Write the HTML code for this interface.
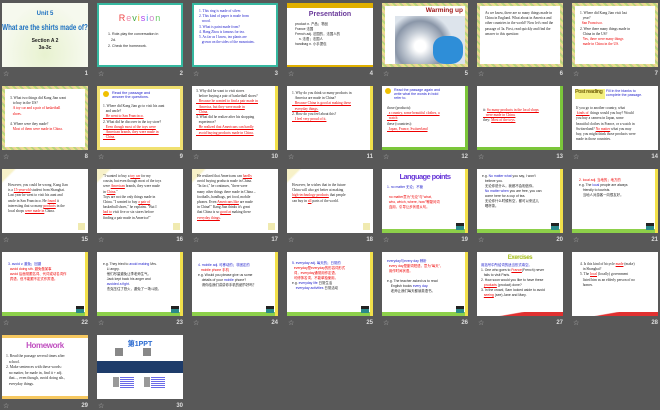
<!DOCTYPE html>
<html><head><meta charset="utf-8"><style>
*{margin:0;padding:0;box-sizing:border-box}
body{width:660px;height:410px;background:#585858;position:relative;overflow:hidden;font-family:"Liberation Serif","Noto Serif CJK SC",serif}
.s{position:absolute;width:86px;height:64px;background:#fff;overflow:hidden;font-size:3.6px;line-height:1.45;color:#222}
.st{position:absolute;font:7px "DejaVu Sans",sans-serif;color:#bbb}
.n{position:absolute;width:30px;text-align:right;font:bold 6px "Liberation Sans",sans-serif;color:#ddd}
.r{color:#e00}.b{color:#22c}.u{text-decoration:underline}
.t{position:absolute;left:6px;right:5px;top:8px}
.grb{border:3px solid #7bc63a;border-top:none;border-left:none}
.flow{background:linear-gradient(#fff,#fff) padding-box,repeating-linear-gradient(45deg,#e7e08a 0 2px,#b9d47c 2px 4px,#f0c8a0 4px 5px) border-box;border:3px solid transparent}
.cap{position:absolute;right:4px;bottom:3px;width:8px;height:7px;background:#2b8a8a;border-top:3px solid #222}
.gb{position:absolute;left:0;right:0;bottom:0;height:4px;background:#8dd04a}
.yb{position:absolute;right:0;top:0;bottom:0;width:3px;background:#f2e04a}
.cn{font-family:"Liberation Sans","Noto Sans CJK SC",sans-serif}
</style></head><body>

<!-- Row 1 -->
<div class="s" style="left:2px;top:3px;background:radial-gradient(ellipse at 50% 80%,#e8f2d0,#f6f9ee 70%)">
<div style="position:absolute;top:8px;width:100%;text-align:center;font:bold 6px 'Liberation Sans';color:#1a6fc0">Unit 5</div>
<div style="position:absolute;top:20px;left:43px;white-space:nowrap;transform:translateX(-50%) scaleX(.78);font:bold 8px 'Liberation Sans';color:#1a6fc0">What are the shirts made of?</div>
<div style="position:absolute;top:35px;width:100%;text-align:center;font:bold 5px 'Liberation Sans';color:#222;line-height:1.3">Section A 2<br>3a-3c</div>
</div>
<div class="s" style="left:97px;top:3px;border:2px solid #36b8a0">
<div style="position:absolute;top:8px;width:100%;text-align:center;font:9px 'Liberation Sans';letter-spacing:1px"><span style="color:#e44">R</span><span style="color:#e8a">e</span><span style="color:#4a4">v</span><span style="color:#e8b020">i</span><span style="color:#a4e">s</span><span style="color:#4ad">i</span><span style="color:#c8c">o</span><span style="color:#6c6">n</span></div>
<div style="position:absolute;top:26px;left:9px;font:3.6px 'Liberation Sans';line-height:1.7">1. Role-play the conversation in<br>&nbsp;&nbsp;&nbsp;2d.<br>2. Check the homework.</div>
</div>
<div class="s" style="left:192px;top:3px;border:2px solid #36b8a0">
<div class="t b" style="top:4px;left:5px">1. This ring is made of silver.<br>2. This kind of paper is made from<br>&nbsp;&nbsp;&nbsp;wood.<br>3. What is paint made from?<br>4. Hang Zhou is famous for tea.<br>5. As far as I know, tea plants are<br>&nbsp;&nbsp;&nbsp;grown on the sides of the mountains.</div>
</div>
<div class="s" style="left:287px;top:3px;border-top:5px solid #e0b000;border-bottom:2px solid #e0b000">
<div style="position:absolute;top:3px;width:100%;text-align:center;font:bold 7px 'Liberation Sans';color:#6a3a9a">Presentation</div>
<div class="t cn" style="top:14px;left:8px;font-size:3.4px">product n. 产品；物品<br>France 法国<br>French adj. 法国的，法国人的<br>&nbsp;&nbsp;&nbsp;&nbsp;n. 法语；法国人<br>handbag n. 小手提包</div>
</div>
<div class="s flow" style="left:382px;top:3px">
<div style="position:absolute;left:10px;top:10px;width:72px;height:50px;background:radial-gradient(circle at 35% 60%,#fff 0 10%,#c8cfd8 25%,#8a96a8 45%,#dde4ec 60%),#ccd;"></div>
<div style="position:absolute;left:48px;top:30px;width:30px;height:28px;background:#2e8ed8;border-radius:40%"></div>
<div style="position:absolute;right:2px;top:1px;font:bold 6.5px 'Liberation Sans';color:#a01818">Warming up</div>
</div>
<div class="s flow" style="left:477px;top:3px">
<div class="t" style="top:5px;left:5px">As we know, there are so many things made in China in England. What about in America and other countries in the world? Now let's read the passage of 3a. First, read quickly and find the answer to this question:</div>
</div>
<div class="s flow" style="left:572px;top:3px">
<div class="t" style="top:5px;left:5px">1. Where did Kang Jian visit last<br>&nbsp;&nbsp;&nbsp;year?<br><span class="r">&nbsp;&nbsp;San Francisco.</span><br>2. Were there many things made in<br>&nbsp;&nbsp;&nbsp;China in the US?<br><span class="r">&nbsp;&nbsp;&nbsp;Yes, there were many things<br>&nbsp;&nbsp;&nbsp;made in China in the US.</span></div>
</div>

<!-- Row 2 -->
<div class="s flow" style="left:2px;top:86px">
<div class="t" style="top:7px;left:5px">3. What two things did Kang Jian want<br>&nbsp;&nbsp;&nbsp;to buy in the US?<br><span class="r">&nbsp;&nbsp;&nbsp;A toy car and a pair of basketball<br>&nbsp;&nbsp;&nbsp;shoes.</span><br><br>4. Where were they made?<br><span class="r">&nbsp;&nbsp;&nbsp;Most of them were made in China.</span></div>
</div>
<div class="s" style="left:97px;top:86px;background:#fff;border:3px solid #f0e070">
<div style="position:absolute;left:3px;top:2px;width:6px;height:6px;border-radius:50%;background:#f0c000"></div>
<div class="b" style="position:absolute;left:12px;top:2px;font:3.8px 'Liberation Sans'">Read the passage and<br>answer the questions.</div>
<div class="t" style="top:15px;left:3px">1. Where did Kang Jian go to visit his aunt<br>&nbsp;&nbsp;&nbsp;and uncle?<br><span class="r u">&nbsp;&nbsp;&nbsp;He went to San Francisco.</span><br>2. What did he discover in the toy store?<br><span class="r u">&nbsp;&nbsp;&nbsp;Even though most of the toys were<br>&nbsp;&nbsp;&nbsp;American brands, they were made in<br>&nbsp;&nbsp;&nbsp;China.</span></div>
</div>
<div class="s" style="left:192px;top:86px">
<div class="t" style="top:3px;left:4px">3. Why did he want to visit stores<br>&nbsp;&nbsp;&nbsp;before buying a pair of basketball shoes?<br><span class="r u">&nbsp;&nbsp;&nbsp;Because he wanted to find a pair made in<br>&nbsp;&nbsp;&nbsp;America, but they were made in<br>&nbsp;&nbsp;&nbsp;China.</span><br>4. What did he realize after his shopping<br>&nbsp;&nbsp;&nbsp;experience?<br><span class="r u">&nbsp;&nbsp;&nbsp;He realized that Americans can hardly<br>&nbsp;&nbsp;&nbsp;avoid buying products made in China.</span></div>
<div class="yb"></div>
</div>
<div class="s" style="left:287px;top:86px">
<div class="t" style="top:5px;left:5px">1. Why do you think so many products in<br>&nbsp;&nbsp;&nbsp;America are made in China?<br><span class="r u">&nbsp;&nbsp;&nbsp;Because China is good at making these<br>&nbsp;&nbsp;&nbsp;everyday things.</span><br>2. How do you feel about this?<br><span class="r u">&nbsp;&nbsp;&nbsp;I feel very proud of it.</span></div>
<div class="yb"></div>
</div>
<div class="s" style="left:382px;top:86px">
<div style="position:absolute;left:3px;top:2px;width:6px;height:6px;border-radius:50%;background:#f0c000"></div>
<div class="b" style="position:absolute;left:12px;top:2px;font:3.6px 'Liberation Sans'">Read the passage again and<br>write what the words in bold<br>refer to.</div>
<div class="t" style="top:20px;left:5px">those (products):<br><span class="r u">&nbsp;&nbsp;a country, some beautiful clothes, a<br>&nbsp;&nbsp;watch</span><br>these (countries):<br><span class="r u">&nbsp;&nbsp;Japan, France, Switzerland</span></div>
<div class="grb" style="position:absolute;inset:0"></div>
</div>
<div class="s" style="left:477px;top:86px">
<div class="t" style="top:22px;left:6px">it: <span class="r u">So many products in the local shops<br>&nbsp;&nbsp;&nbsp;were made in China.</span><br>they: <span class="r u">Most of the toys.</span></div>
<div class="grb" style="position:absolute;inset:0"></div>
</div>
<div class="s" style="left:572px;top:86px">
<div style="position:absolute;left:3px;top:3px;width:30px;height:10px;background:#f4f080;font:bold 5.5px 'Liberation Sans';color:#7a6a10;letter-spacing:-.5px">Post reading</div>
<div class="b" style="position:absolute;left:34px;top:3px;font:3.6px 'Liberation Sans'">Fill in the blanks to<br>complete the passage.</div>
<div class="t" style="top:20px;left:4px">If you go to another country, what<br><span class="r u">&nbsp;kinds of&nbsp;</span> things would you buy? Would<br>you buy a camera in Japan, some<br>beautiful clothes in France, or a watch in<br>Switzerland? <span class="r u">No matter</span> what you may<br>buy, you might think those products were<br>made in those countries.</div>
</div>

<!-- Row 3 -->
<div class="s" style="left:2px;top:169px;background:linear-gradient(135deg,#f7f1c8 0 8%,#fff 10%)">
<div class="t" style="top:14px;left:6px">However, you could be wrong. Kang Jian<br>is a <span class="r u">15-year-old</span> student from Shanghai.<br>Last year he went to visit his aunt and<br>uncle in San Francisco. He <span class="r u">found</span> it<br>interesting that so many <span class="r u">products</span> in the<br>local shops <span class="r u">were made in</span> China.</div>
<div style="position:absolute;right:3px;bottom:3px;width:7px;height:7px;background:#f0eab0"></div>
</div>
<div class="s" style="left:97px;top:169px;background:linear-gradient(135deg,#f7f1c8 0 8%,#fff 10%)">
<div class="t" style="top:5px;left:6px">"I wanted to buy a <span class="r u">toy car</span> for my<br>cousin, but even though most of the toys<br>were <span class="r u">American</span> brands, they were made<br>in <span class="r u">China</span>."<br>Toys are not the only things made in<br>China. "I wanted to buy <span class="r u">a pair of</span><br>basketball shoes," he explains. "But I<br><span class="r u">had to</span> visit five or six stores before<br>finding a pair made in America!"</div>
<div style="position:absolute;right:3px;bottom:3px;width:7px;height:7px;background:#f0eab0"></div>
</div>
<div class="s" style="left:192px;top:169px;background:linear-gradient(135deg,#f7f1c8 0 8%,#fff 10%)">
<div class="t" style="top:5px;left:5px">He realized that Americans can <span class="r u">hardly</span><br>avoid buying products made in China.<br>"In fact," he continues, "there were<br>many other things there made in China –<br>footballs, handbags, pet food, mobile<br>phones. Even <span class="r u">Americans like</span> are made<br>in China!" Kang Jian thinks it's great<br>that China is so <span class="r u">good at</span> making these<br><span class="r u">everyday things</span>.</div>
<div style="position:absolute;right:3px;bottom:3px;width:7px;height:7px;background:#f0eab0"></div>
</div>
<div class="s" style="left:287px;top:169px;background:linear-gradient(135deg,#f7f1c8 0 8%,#fff 10%)">
<div class="t" style="top:14px;left:5px">However, he wishes that in the future<br>China will also get better at making<br><span class="r u">high-technology products</span> that people<br>can buy in <span class="r u">all</span> parts of the world.</div>
<div style="position:absolute;right:3px;bottom:3px;width:7px;height:7px;background:#f0eab0"></div>
</div>
<div class="s" style="left:382px;top:169px">
<div style="position:absolute;top:3px;width:100%;text-align:center;font:bold 7.5px 'Liberation Sans';color:#6a3ad8;letter-spacing:-.6px">Language points</div>
<div class="t cn" style="top:16px;left:5px;font-size:3.4px"><span class="b">1. no matter 无论；不管</span><br><br><span class="r">&nbsp;&nbsp;no matter意为"无论"与"what,<br>&nbsp;&nbsp;who, which, where, how"等疑问词<br>&nbsp;&nbsp;连用，引导让步状语从句。</span></div>
<div class="gb"></div><div class="yb"></div><div class="cap"></div>
</div>
<div class="s" style="left:477px;top:169px">
<div class="t cn" style="top:5px;left:5px;font-size:3.4px">e.g. <span class="b">No matter what</span> you say, I won't<br>&nbsp;&nbsp;&nbsp;believe you.<br>&nbsp;&nbsp;&nbsp;无论你说什么，我都不会相信你。<br>&nbsp;&nbsp;&nbsp;<span class="b">No matter when</span> you are free, you can<br>&nbsp;&nbsp;&nbsp;come here for a cup of tea.<br>&nbsp;&nbsp;&nbsp;无论你什么时候有空，都可以来这儿<br>&nbsp;&nbsp;&nbsp;喝杯茶。</div>
<div class="gb"></div><div class="yb"></div><div class="cap"></div>
</div>
<div class="s" style="left:572px;top:169px">
<div class="t cn" style="top:9px;left:7px;font-size:3.4px"><span class="r">2. local adj. 当地的；地方的</span><br>e.g. The <span class="b">local</span> people are always<br>&nbsp;&nbsp;&nbsp;&nbsp;friendly to tourists.<br>&nbsp;&nbsp;&nbsp;&nbsp;当地人对游客一向很友好。</div>
<div class="gb"></div><div class="yb"></div><div class="cap"></div>
</div>

<!-- Row 4 -->
<div class="s" style="left:2px;top:252px">
<div class="t cn" style="top:10px;left:6px;font-size:3.4px"><span class="b">3. avoid v. 避免；回避</span><br><span class="r">&nbsp;&nbsp;avoid doing sth. 避免做某事<br>&nbsp;&nbsp;avoid 后面常跟名词、代词或动名词作<br>&nbsp;&nbsp;宾语，但不能跟不定式作宾语。</span></div>
<div class="gb"></div><div class="yb"></div><div class="cap"></div>
</div>
<div class="s" style="left:97px;top:252px">
<div class="t cn" style="top:10px;left:6px;font-size:3.4px">e.g. They tried to <span class="b">avoid making</span> Mrs.<br>&nbsp;&nbsp;&nbsp;&nbsp;Li angry.<br>&nbsp;&nbsp;&nbsp;&nbsp;他们尽量避免让李老师生气。<br>&nbsp;&nbsp;&nbsp;&nbsp;Jack kept back his anger and<br>&nbsp;&nbsp;&nbsp;&nbsp;<span class="b">avoided a fight</span>.<br>&nbsp;&nbsp;&nbsp;&nbsp;杰克压住了怒火，避免了一场斗殴。</div>
<div class="gb"></div><div class="yb"></div><div class="cap"></div>
</div>
<div class="s" style="left:192px;top:252px">
<div class="t cn" style="top:11px;left:6px;font-size:3.4px"><span class="b">4. mobile adj. 可移动的；非固定的</span><br><span class="r">&nbsp;&nbsp;&nbsp;mobile phone 手机</span><br>e.g. Would you please give us some<br>&nbsp;&nbsp;&nbsp;&nbsp;details of your <span class="b">mobile</span> phone?<br>&nbsp;&nbsp;&nbsp;&nbsp;请你给我们讲讲你手机的细节好吗？</div>
<div class="gb"></div><div class="yb"></div><div class="cap"></div>
</div>
<div class="s" style="left:287px;top:252px">
<div class="t cn" style="top:9px;left:5px;font-size:3.4px"><span class="b">5. everyday adj. 每天的；日常的</span><br><span class="r">&nbsp;&nbsp;everyday是everyday的形容词形式<br>&nbsp;&nbsp;词，everyday通常用作定语，<br>&nbsp;&nbsp;可修饰名词，不能单独使用。</span><br>e.g. <span class="b">everyday life</span> 日常生活<br>&nbsp;&nbsp;&nbsp;&nbsp;<span class="b">everyday activities</span> 日常活动</div>
<div class="gb"></div><div class="yb"></div><div class="cap"></div>
</div>
<div class="s" style="left:382px;top:252px">
<div class="t cn" style="top:7px;left:5px;font-size:3.4px"><span class="b">everyday与every day 辨析</span><br><span class="r">&nbsp;&nbsp;every day是副词短语，意为"每天"，<br>&nbsp;&nbsp;用作时间状语。</span><br><br>e.g. The teacher asked us to read<br>&nbsp;&nbsp;&nbsp;&nbsp;English books <span class="b">every day</span>.<br>&nbsp;&nbsp;&nbsp;&nbsp;老师让我们每天都读英语书。</div>
<div class="gb"></div><div class="yb"></div><div class="cap"></div>
</div>
<div class="s" style="left:477px;top:252px">
<div style="position:absolute;top:3px;width:100%;text-align:center;font:bold 6px 'Liberation Sans';color:#a8c020;letter-spacing:-.4px">Exercises</div>
<div class="t cn" style="top:11px;left:4px;font-size:3.4px"><span class="b">用括号中所给词的适当形式填空。</span><br>1. One who goes to <span class="r u">France</span>(French) never<br>&nbsp;&nbsp;&nbsp;fails to visit Paris.<br>2. How soon would you like to have these<br>&nbsp;&nbsp;&nbsp;<span class="r u">products</span> (product) done?<br>3. In the crowd, Sam looked aside to avoid<br>&nbsp;&nbsp;&nbsp;<span class="r u">seeing</span> (see) Jane and Mary.</div>
<div style="position:absolute;left:0;right:0;bottom:0;height:4px;background:linear-gradient(170deg,transparent 40%,#e03030 45%)"></div>
</div>
<div class="s" style="left:572px;top:252px">
<div class="t" style="top:10px;left:8px">4. Is this kind of bicycle <span class="r u">made</span> (make)<br>&nbsp;&nbsp;&nbsp;in Shanghai?<br>5. The <span class="r u">local</span> (locally) government<br>&nbsp;&nbsp;&nbsp;listed him as an elderly person of no<br>&nbsp;&nbsp;&nbsp;homes.</div>
<div style="position:absolute;left:0;right:0;bottom:0;height:4px;background:linear-gradient(170deg,transparent 40%,#e03030 45%)"></div>
</div>

<!-- Row 5 -->
<div class="s" style="left:2px;top:335px;border-top:3px solid #f6c860;border-bottom:3px solid #f6c860">
<div style="position:absolute;top:3px;width:100%;text-align:center;font:bold 8px 'Liberation Sans';color:#c050c0;letter-spacing:-.4px">Homework</div>
<div class="t" style="top:16px;left:4px;font-size:3.8px">1. Read the passage several times after<br>&nbsp;&nbsp;&nbsp;school.<br>2. Make sentences with these words:<br>&nbsp;&nbsp;&nbsp;no matter, be made in, find it + adj.<br>&nbsp;&nbsp;&nbsp;that..., even though, avoid doing sth.,<br>&nbsp;&nbsp;&nbsp;everyday things.</div>
</div>
<div class="s" style="left:97px;top:335px">
<div style="position:absolute;top:4px;width:100%;text-align:center;font:bold 7px 'Liberation Sans';color:#2a6ad0" class="cn">第1PPT</div>
<div style="position:absolute;left:18px;top:13px;width:8px;height:8px;background:#888"></div>
<div style="position:absolute;left:46px;top:13px;width:8px;height:8px;background:#888"></div>
<div style="position:absolute;left:0;right:0;top:26px;height:12px;background:#1e3c6a"></div>
<div style="position:absolute;left:16px;top:42px;width:6px;height:10px;background:#999"></div>
<div style="position:absolute;left:23px;top:42px;width:14px;height:12px;background:repeating-linear-gradient(#6a6ae8 0 1px,#fff 1px 2px)"></div>
<div style="position:absolute;left:47px;top:42px;width:6px;height:10px;background:#999"></div>
<div style="position:absolute;left:54px;top:42px;width:14px;height:12px;background:repeating-linear-gradient(#6a6ae8 0 1px,#fff 1px 2px)"></div>
</div>

<script>
var b=document.body;
for(var i=0;i<30;i++){var c=i%7,r=Math.floor(i/7),l=2+95*c,t=3+83*r;
var s=document.createElement('div');s.className='st';s.textContent='☆';s.style.left=(l+1)+'px';s.style.top=(t+67)+'px';b.appendChild(s);
var n=document.createElement('div');n.className='n';n.textContent=i+1;n.style.left=(l+56)+'px';n.style.top=(t+68)+'px';b.appendChild(n);}
</script>
</body></html>
